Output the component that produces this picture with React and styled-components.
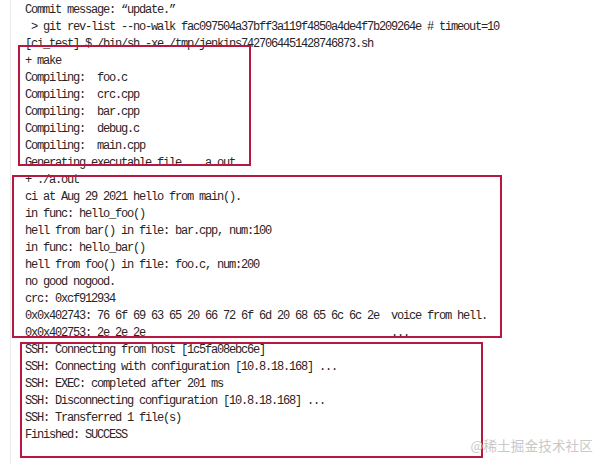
import React from "react";
import styled, { createGlobalStyle } from "styled-components";

const lines = [
  "Commit message: \u201cupdate.\u201d",
  " > git rev-list --no-walk fac097504a37bff3a119f4850a4de4f7b209264e # timeout=10",
  "[ci_test] $ /bin/sh -xe /tmp/jenkins7427064451428746873.sh",
  "+ make",
  "Compiling:  foo.c",
  "Compiling:  crc.cpp",
  "Compiling:  bar.cpp",
  "Compiling:  debug.c",
  "Compiling:  main.cpp",
  "Generating executable file... a.out",
  "+ ./a.out",
  "ci at Aug 29 2021 hello from main().",
  "in func: hello_foo()",
  "hell from bar() in file: bar.cpp, num:100",
  "in func: hello_bar()",
  "hell from foo() in file: foo.c, num:200",
  "no good nogood.",
  "crc: 0xcf912934",
  "0x0x402743: 76 6f 69 63 65 20 66 72 6f 6d 20 68 65 6c 6c 2e  voice from hell.",
  "0x0x402753: 2e 2e 2e                                         ...",
  "SSH: Connecting from host [1c5fa08ebc6e]",
  "SSH: Connecting with configuration [10.8.18.168] ...",
  "SSH: EXEC: completed after 201 ms",
  "SSH: Disconnecting configuration [10.8.18.168] ...",
  "SSH: Transferred 1 file(s)",
  "Finished: SUCCESS",
];

// red marks drawn over the log
const marks = [
  { left: 18, top: 45, width: 233, height: 121 },
  { left: 12, top: 175, width: 490, height: 163 },
  { left: 20, top: 342, width: 463, height: 116 },
];

const GlobalStyle = createGlobalStyle`
  body {
    margin: 0;
    background: #fff;
  }
`;

const Page = styled.div`
  position: relative;
  width: 607px;
  height: 464px;
  overflow: hidden;
  background: #fff;
`;

const Console = styled.pre`
  margin: 0 0 0 10px;
  padding: 2px 0 0 14px;
  height: 100%;
  box-sizing: border-box;
  border-left: 1px solid #ececec;
  font-family: "Liberation Mono", "DejaVu Sans Mono", monospace;
  font-size: 12px;
  letter-spacing: -1.2px;
  line-height: 17px;
  color: #262626;
  white-space: pre;
`;

const Line = styled.div`
  height: 17px;
`;

const Mark = styled.div`
  position: absolute;
  box-sizing: border-box;
  border: 2px solid #b8173f;
`;

const Watermark = styled.div`
  position: absolute;
  right: 14px;
  bottom: 9px;
  font-family: "Noto Sans CJK SC", "Noto Sans", sans-serif;
  font-size: 13.5px;
  color: #c9c9c9;
  letter-spacing: 0.2px;
`;

const App = () => {
  return (
    <Page>
      <GlobalStyle />
      <Console>
        {lines.map((text, i) => (
          <Line key={i}>{text}</Line>
        ))}
      </Console>
      {marks.map((m, i) => (
        <Mark key={i} style={m} />
      ))}
      <Watermark>@稀土掘金技术社区</Watermark>
    </Page>
  );
};

export default App;
